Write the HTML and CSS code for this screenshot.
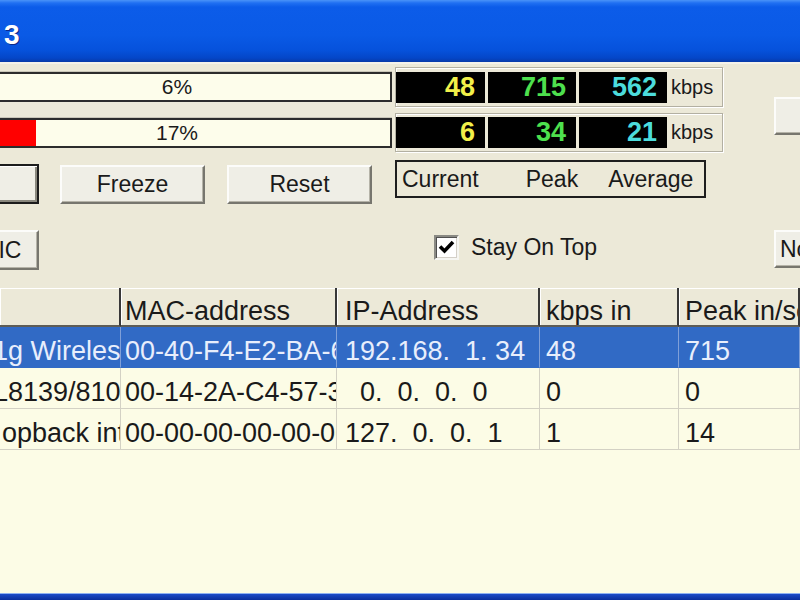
FILE: index.html
```html
<!DOCTYPE html>
<html>
<head>
<meta charset="utf-8">
<title>Bandwidth Monitor 3</title>
<link rel="stylesheet" href="styles.css">
</head>
<body>
<div class="window">
  <div class="titlebar"><span class="title">3</span></div>
  <div class="client">
    <div class="top">
      <div class="bar r1"><span class="fill" style="width:6%"></span><span class="pct">6%</span></div>
      <div class="group r1">
        <span class="num cur">48</span><span class="num peak">715</span><span class="num avg">562</span><span class="unit">kbps</span>
      </div>
      <div class="side"><button class="btn side-btn">Hide</button></div>

      <div class="bar r2"><span class="fill" style="width:17%"></span><span class="pct">17%</span></div>
      <div class="group r2 g2">
        <span class="num cur">6</span><span class="num peak">34</span><span class="num avg">21</span><span class="unit">kbps</span>
      </div>

      <div class="btnrow r3">
        <button class="btn default">Start</button>
        <button class="btn">Freeze</button>
        <button class="btn">Reset</button>
      </div>
      <div class="legend r3">
        <span>Current</span><span class="l-peak">Peak</span><span class="l-avg">Average</span>
      </div>
    </div>

    <div class="options">
      <button class="btn nic">Select NIC</button>
      <span class="check"><svg viewBox="0 0 21 21" width="21" height="21"><path d="M4 9.5 L8.5 14 L17 5" fill="none" stroke="#000" stroke-width="3.6"/></svg></span>
      <span class="check-label">Stay On Top</span>
      <button class="btn no-btn">Normal</button>
    </div>

    <div class="list">
      <div class="lrow head">
        <div class="cell c1"></div>
        <div class="cell c2">MAC-address</div>
        <div class="cell c3">IP-Address</div>
        <div class="cell c4">kbps in</div>
        <div class="cell c5">Peak in/sec</div>
      </div>
      <div class="lrow sel">
        <div class="cell c1 ind7">1g Wireless</div>
        <div class="cell c2">00-40-F4-E2-BA-6C</div>
        <div class="cell c3 ip">192.168.  1. 34</div>
        <div class="cell c4">48</div>
        <div class="cell c5">715</div>
      </div>
      <div class="lrow">
        <div class="cell c1 ind7">L8139/810 F</div>
        <div class="cell c2">00-14-2A-C4-57-3E</div>
        <div class="cell c3 ip">  0.  0.  0.  0</div>
        <div class="cell c4">0</div>
        <div class="cell c5">0</div>
      </div>
      <div class="lrow">
        <div class="cell c1 ind2">opback int</div>
        <div class="cell c2">00-00-00-00-00-00</div>
        <div class="cell c3 ip">127.  0.  0.  1</div>
        <div class="cell c4">1</div>
        <div class="cell c5">14</div>
      </div>
    </div>
  </div>
  <div class="frame-bottom"></div>
</div>
</body>
</html>
```

FILE: styles.css
```css
* { box-sizing: border-box; }
html, body { margin: 0; padding: 0; }
body {
  width: 800px;
  height: 600px;
  overflow: hidden;
  background: #ece9d8;
  font-family: "Liberation Sans", Arial, sans-serif;
  color: #1a1a1a;
}
.window {
  width: 800px;
  height: 600px;
  display: flex;
  flex-direction: column;
  overflow: hidden;
}
.titlebar {
  height: 62px;
  flex: none;
  display: flex;
  align-items: center;
  padding-left: 4px;
  padding-top: 8px;
  background: linear-gradient(to bottom, #4a93f8 0px, #2070f2 3px, #0c5ce9 7px, #0a5ae6 35px, #0652dc 50px, #0446c8 58px, #083aa8 62px);
}
.title {
  color: #fff;
  font-weight: bold;
  font-size: 28px;
  text-shadow: 1px 1px 0 #0b2a8a;
}
.client {
  flex: 1;
  min-height: 0;
  display: flex;
  flex-direction: column;
  border-top: 2px solid #f4f2ea;
  padding-top: 3px;
}

/* top area */
.top {
  display: grid;
  grid-template-columns: 392px 328px 1fr;
  grid-template-rows: 46px 47px 45px;
  column-gap: 3px;
  flex: none;
}
.r1 { grid-row: 1; }
.r2 { grid-row: 2; }
.r3 { grid-row: 3; }
.bar, .btnrow { grid-column: 1; }
.group, .legend { grid-column: 2; }

.bar {
  align-self: start;
  margin-top: 5px;
  margin-left: -38px;
  height: 30px;
  border: 2px solid #2c2c2c;
  background: #fdfdeb;
  position: relative;
  display: flex;
  align-items: center;
  justify-content: center;
  box-shadow: 0 -1px 0 #c9c6b8;
}
.fill {
  position: absolute;
  left: 0;
  top: 0;
  bottom: 0;
  background: #ff0000;
}
.pct {
  position: relative;
  font-size: 21px;
  color: #1a1a1a;
}

.group {
  align-self: start;
  height: 40px;
  display: flex;
  align-items: center;
  gap: 3px;
  border: 1px solid #b3b0a2;
  box-shadow: inset 1px 1px 0 #fff, 1px 1px 0 #fff;
}
.group.g2 { height: 39px; }
.num {
  width: 89px;
  height: 31px;
  background: #000;
  font-weight: bold;
  font-size: 27px;
  line-height: 31px;
  text-align: right;
  padding-right: 10px;
}
.num.peak, .num.avg { width: 88px; }
.cur { color: #f2f04a; }
.peak { color: #4ee04e; }
.avg { color: #4cdcdc; }
.unit {
  font-size: 20px;
  margin-left: 1px;
  color: #1a1a1a;
}

.side {
  grid-column: 3;
  grid-row: 1 / span 3;
  padding-left: 48px;
  padding-top: 30px;
}

.btn {
  font-family: "Liberation Sans", Arial, sans-serif;
  font-size: 23px;
  color: #1a1a1a;
  background: #efeee6;
  border: 2px solid;
  border-color: #fcfcfa #77766e #77766e #fcfcfa;
  box-shadow: inset -1px -1px 0 #b5b3a8;
  padding: 0;
  white-space: nowrap;
  overflow: hidden;
}
.side-btn {
  width: 100px;
  height: 38px;
  color: transparent;
}
.btnrow {
  align-self: start;
  margin-top: 5px;
  display: flex;
  gap: 21px;
}
.btnrow .btn {
  width: 145px;
  height: 39px;
}
.btnrow .btn.default {
  margin-left: -106px;
  height: 40px;
  margin-top: -1px;
  border: 2px solid #1c1c1c;
  box-shadow: inset 1px 1px 0 #fff, inset -2px -2px 0 #8a887e;
}
.btnrow .btn + .btn + .btn { margin-left: 1px; }

.legend {
  align-self: start;
  width: 311px;
  height: 38px;
  border: 2px solid #1e1e1e;
  display: flex;
  align-items: center;
  padding-left: 5px;
  font-size: 23px;
}
.l-peak { margin-left: 47px; }
.l-avg { margin-left: 30px; }

/* options */
.options {
  flex: none;
  margin-top: 25px;
  height: 40px;
  display: flex;
  align-items: center;
}
.nic {
  width: 145px;
  height: 40px;
  margin-left: -106px;
}
.check {
  margin-left: 395px;
  width: 25px;
  height: 25px;
  margin-top: -5px;
  background: #fff;
  border: 2px solid;
  border-color: #8a8a84 #f6f6f2 #f6f6f2 #8a8a84;
  box-shadow: inset 1px 1px 0 #505050, inset -1px -1px 0 #d4d0c8;
  display: flex;
  align-items: center;
  justify-content: center;
}
.check-label {
  margin-left: 12px;
  font-size: 23px;
  margin-top: -5px;
}
.no-btn {
  margin-left: auto;
  margin-right: -74px;
  width: 100px;
  height: 38px;
  margin-top: -2px;
  text-align: left;
  padding-left: 4px;
}

/* list view */
.list {
  flex: 1;
  min-height: 0;
  margin-top: 18px;
  background: #fcfce6;
  font-size: 27px;
  overflow: hidden;
}
.lrow {
  display: grid;
  grid-template-columns: 121px 216px 203px 139px 1fr;
  height: 41px;
}
.cell {
  white-space: nowrap;
  overflow: hidden;
  display: flex;
  align-items: center;
  padding-top: 8px;
  border-right: 1px solid #d3d1c4;
  border-bottom: 1px solid #d3d1c4;
}
.c2 { padding-left: 4px; }
.c3 { padding-left: 8px; }
.c4, .c5 { padding-left: 6px; }
.ip { white-space: pre; }
.ind7 { text-indent: -7px; }
.ind2 { padding-left: 2px; }

.head {
  height: 39px;
  background: #ece9d8;
}
.head .cell {
  border-right: 2px solid #383838;
  border-bottom: 2px solid #5e5d56;
  box-shadow: inset 1px 1px 0 #fff;
  padding-top: 10px;
  color: #1a1a1a;
}
.sel {
  background: #316ac5;
  color: #e8eefc;
}
.sel .cell {
  border-right-color: #7f9fd8;
  border-bottom-color: #316ac5;
}

.frame-bottom {
  flex: none;
  height: 7px;
  background: linear-gradient(to bottom, #8fb2f0 0px, #8fb2f0 1px, #1c4cc8 1px, #0a2f9c 7px);
}
```
